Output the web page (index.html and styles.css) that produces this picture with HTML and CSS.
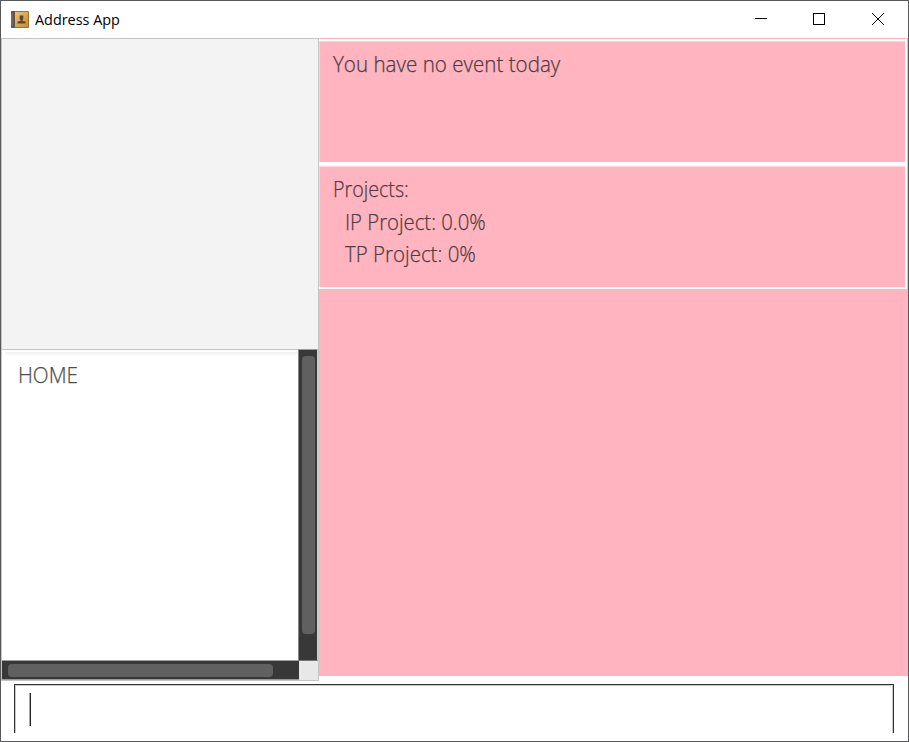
FILE: index.html
```
<!DOCTYPE html>
<html lang="en">
<head>
<meta charset="utf-8">
<title>Address App</title>
<link rel="stylesheet" href="styles.css">
</head>
<body>
<div class="window">
  <header class="titlebar">
    <svg class="app-icon" width="18" height="17" viewBox="0 0 18 17">
      <defs><linearGradient id="g" x2="1" y2="1"><stop stop-color="#edc377"/><stop offset="1" stop-color="#c48b38"/></linearGradient></defs>
      <rect width="18" height="17" rx="1" fill="#99732f"/>
      <rect x="4" y="1" width="13" height="15" fill="url(#g)"/>
      <rect width="4" height="17" rx="1" fill="#62554b"/>
      <path d="M1 2v13" stroke="#8a7a6b"/>
      <path d="M8.700 4.500h3.600v3.500l-.8 1v1l3 .6V12.500h-8v-1.900l3-.6V9l-.8-1z" fill="#5a4830"/>
    </svg>
    <h1 class="title"><span>Address App</span></h1>
    <svg class="controls" width="132" height="14" viewBox="0 0 132 14" fill="none" stroke="#000" shape-rendering="crispEdges">
      <path d="M0 5.500h12M58.500 .5h11v11h-11z"/>
      <path d="M117 0l12 12M129 0l-12 12" shape-rendering="auto"/>
    </svg>
  </header>
  <main class="content">
    <section class="sidebar">
      <div class="blank"></div>
      <div class="scroll-pane">
        <div class="view"><span class="label home">HOME</span></div>
        <div class="vbar"><div class="vthumb"></div></div>
        <div class="hbar"><div class="hthumb"></div></div>
        <div class="corner"></div>
      </div>
    </section>
    <section class="details">
      <div class="cards">
        <div class="card"><p><span class="label event">You have no event today</span></p></div>
        <div class="card">
          <p><span class="label heading">Projects:</span></p>
          <p class="item"><span class="label ip">IP Project: 0.0%</span></p>
          <p class="item"><span class="label tp">TP Project: 0%</span></p>
        </div>
      </div>
    </section>
  </main>
  <footer class="command"><div class="field"><div class="caret"></div></div></footer>
</div>
</body>
</html>
```
FILE: styles.css
```
* { box-sizing: border-box; }
body { margin: 0; font-family: "Open Sans", "Noto Sans", sans-serif; }
h1, p { margin: 0; font-weight: inherit; }
.window { width: 909px; height: 742px; border: 1px solid #59595b; background: #fff; display: flex; flex-direction: column; overflow: hidden; }
.titlebar { height: 37px; flex: none; display: flex; align-items: center; padding: 0 23px 0 10px; }
.app-icon { margin-right: 6px; }
.title { flex: 1; font-size: 15px; line-height: 20px; color: #000; padding-bottom: 2px; }
.title span { display: inline-block; transform: scaleX(.96); transform-origin: 0 50%; }
.controls { margin-right: -2px; }
.content { height: 643px; flex: none; display: flex; }
.sidebar { width: 318px; display: flex; flex-direction: column; border: 1px solid #c5c5c5; }
.blank { height: 310px; flex: none; background: #f3f3f3; }
.scroll-pane { flex: 1; display: grid; grid-template-columns: 296px 20px; grid-template-rows: 312px 19px; }
.view { border-top: 1px solid #c4c4c4; border-bottom: 1px solid #a0a0a0; padding: 8px 0 0 16px; background: linear-gradient(#fff 0 2px, #f1f1f1 2px, #fff 6px) 3px 0 no-repeat; }
.vbar { background: #383838; border-left: 1px solid #858585; border-right: 1px solid #d0d0d0; border-top: 1px solid #999; border-bottom: 1px solid #777; padding: 6px 2px 0 3px; }
.vthumb { height: 278px; border-radius: 4px; background: #606060; }
.hbar { background: #383838; padding: 3px 26px 3px 6px; margin-right: -1px; border-bottom: 1px solid #999; }
.hthumb { height: 13px; border-radius: 4px; background: #606060; }
.corner { background: #e8e8e8; margin-left: 1px; }
.details { flex: 1; height: 638px; background: #ffb4bf; padding: 1px 1px 0 0; }
.cards { border: solid #fff; border-width: 2px 2px 2px 0; background: #fff; display: grid; grid-template-rows: 121px 121px; row-gap: 4px; height: 250px; }
.card { background: #ffb4bf; box-shadow: inset 1px 1px #ffd0d7; padding: 6px 0 0 14px; }
.card p { height: 32.5px; line-height: 32px; }
.card .item { padding-left: 12px; }
.label { display: inline-block; white-space: nowrap; transform-origin: 0 50%; font-size: 22px; line-height: 32px; font-weight: 300; color: #4d3c40; -webkit-text-stroke: .25px; }
.event { transform: scaleX(.936); }
.heading { transform: scaleX(.895); }
.ip { transform: scaleX(.923); }
.tp { transform: scaleX(.931); }
.home { color: #4d4d4d; transform: scaleX(.94); }
.command { flex: 1; padding: 3px 14px 0 13px; }
.field { height: 49px; border: solid #333; border-width: 1px 1px 0; box-shadow: inset 1px 1px #c8c8c8, inset -1px 0 #c8c8c8; padding: 8px 0 0 14px; }
.caret { width: 2px; height: 33px; background: #222; border-left: 1px solid #aaa; }
```
